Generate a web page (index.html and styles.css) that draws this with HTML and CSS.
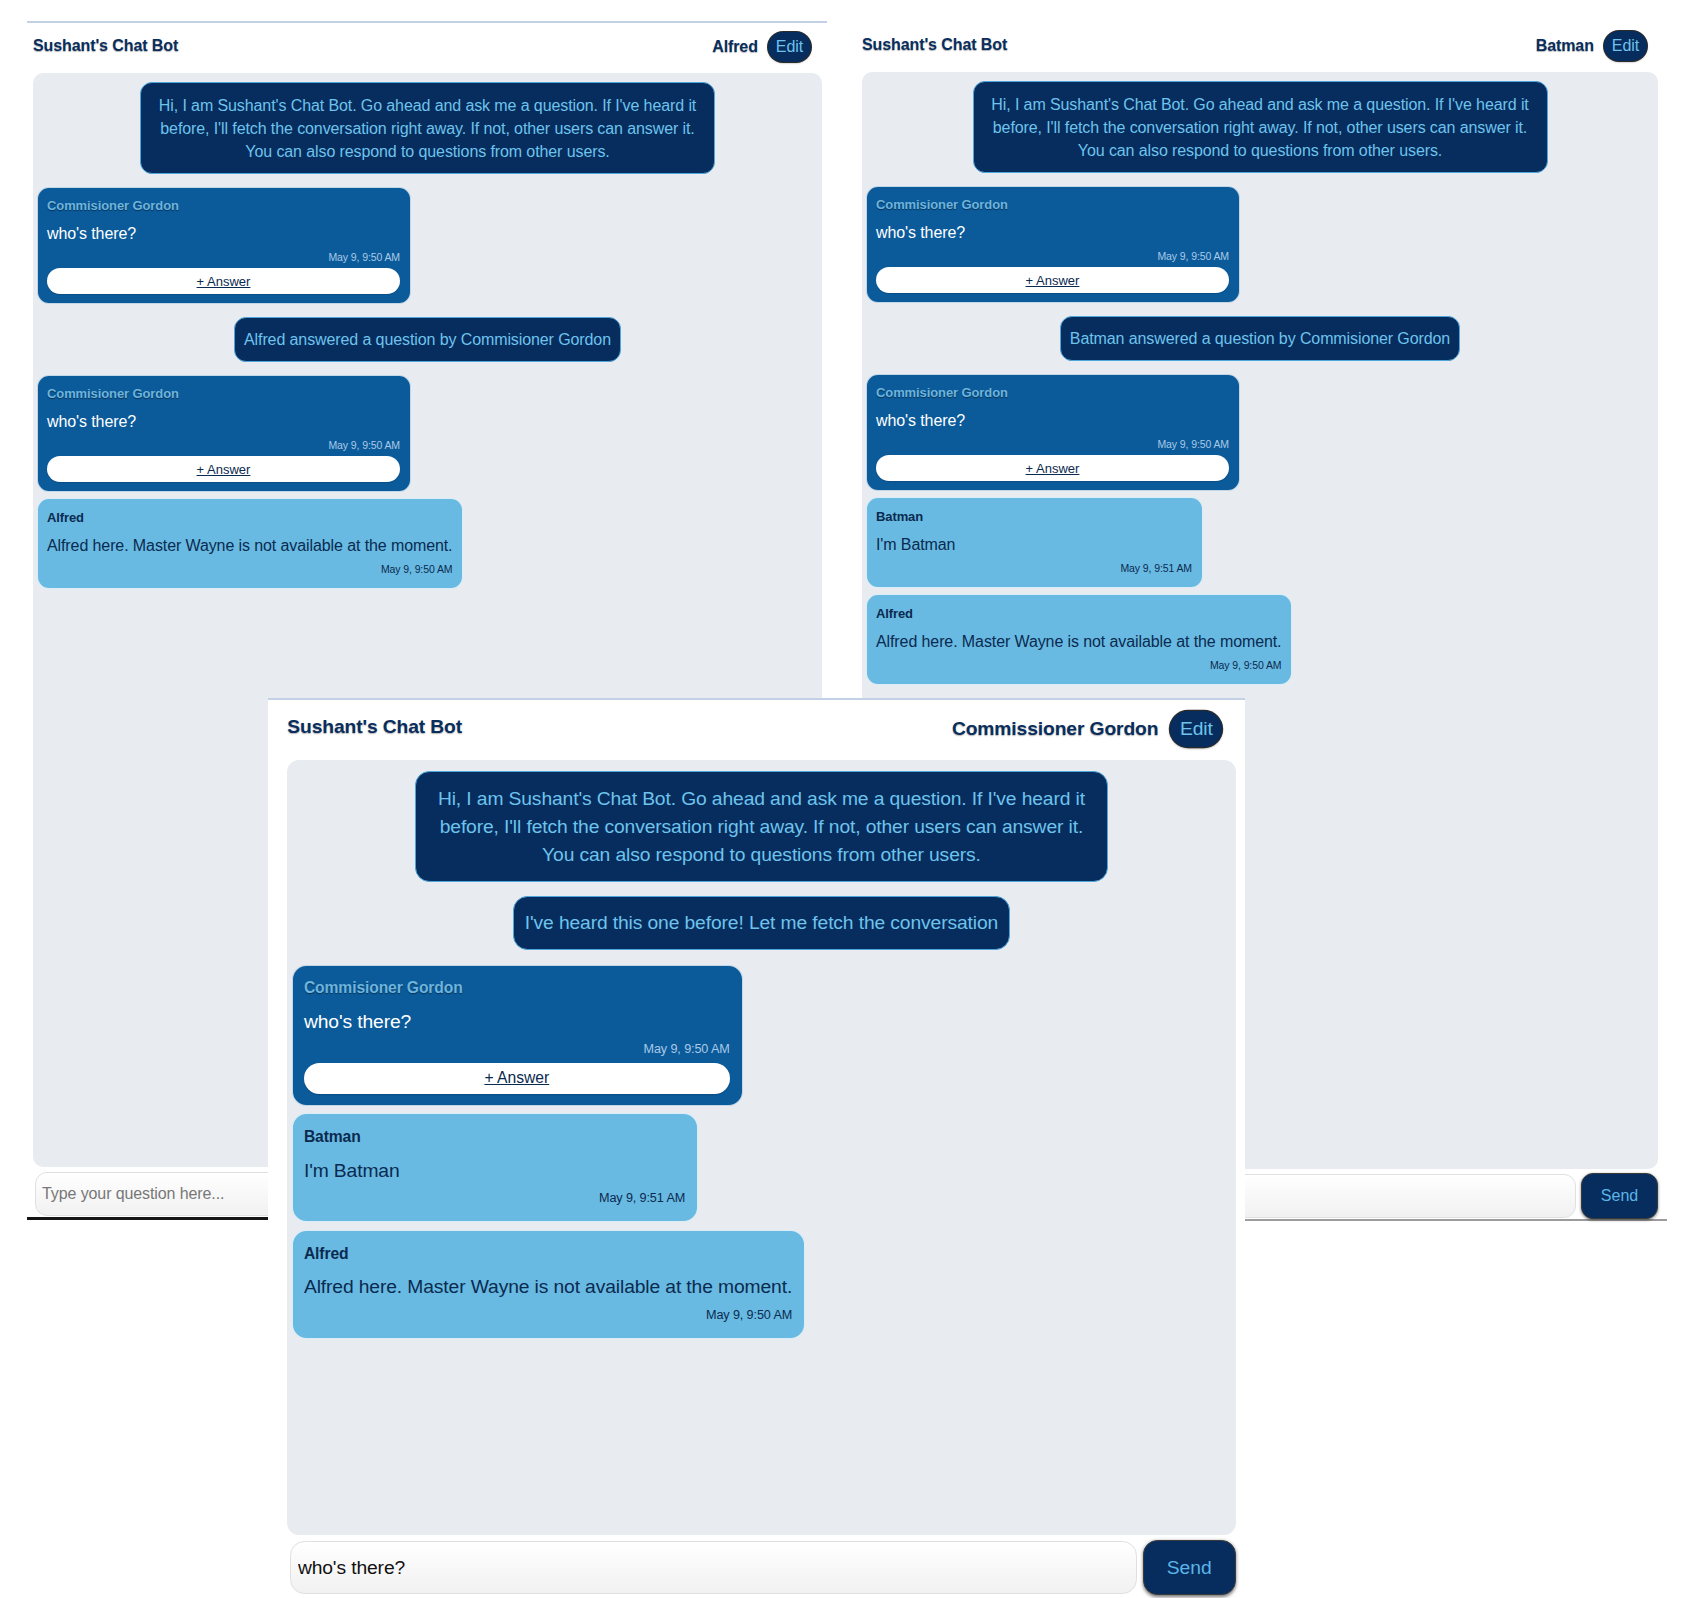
FILE: index.html
```html
<!DOCTYPE html>
<html lang="en">
<head>
<meta charset="utf-8">
<title>Sushant's Chat Bot</title>
<link rel="stylesheet" href="styles.css">
</head>
<body>

<section class="win win-alfred">
  <header class="head">
    <h1 class="title">Sushant's Chat Bot</h1>
    <div class="user"><span class="uname">Alfred</span><button class="edit">Edit</button></div>
  </header>
  <div class="chat">
    <div class="bot welcome">Hi, I am Sushant's Chat Bot. Go ahead and ask me a question. If I've heard it before, I'll fetch the conversation right away. If not, other users can answer it. You can also respond to questions from other users.</div>
    <div class="card q">
      <div class="who">Commisioner Gordon</div>
      <div class="msg">who's there?</div>
      <div class="time">May 9, 9:50 AM</div>
      <button class="answer">+ Answer</button>
    </div>
    <div class="bot">Alfred answered a question by Commisioner Gordon</div>
    <div class="card q">
      <div class="who">Commisioner Gordon</div>
      <div class="msg">who's there?</div>
      <div class="time">May 9, 9:50 AM</div>
      <button class="answer">+ Answer</button>
    </div>
    <div class="card r">
      <div class="who">Alfred</div>
      <div class="msg">Alfred here. Master Wayne is not available at the moment.</div>
      <div class="time">May 9, 9:50 AM</div>
    </div>
  </div>
  <div class="composer">
    <input class="ask" type="text" placeholder="Type your question here...">
    <button class="send">Send</button>
  </div>
</section>

<section class="win win-batman">
  <header class="head">
    <h1 class="title">Sushant's Chat Bot</h1>
    <div class="user"><span class="uname">Batman</span><button class="edit">Edit</button></div>
  </header>
  <div class="chat">
    <div class="bot welcome">Hi, I am Sushant's Chat Bot. Go ahead and ask me a question. If I've heard it before, I'll fetch the conversation right away. If not, other users can answer it. You can also respond to questions from other users.</div>
    <div class="card q">
      <div class="who">Commisioner Gordon</div>
      <div class="msg">who's there?</div>
      <div class="time">May 9, 9:50 AM</div>
      <button class="answer">+ Answer</button>
    </div>
    <div class="bot">Batman answered a question by Commisioner Gordon</div>
    <div class="card q">
      <div class="who">Commisioner Gordon</div>
      <div class="msg">who's there?</div>
      <div class="time">May 9, 9:50 AM</div>
      <button class="answer">+ Answer</button>
    </div>
    <div class="card r">
      <div class="who">Batman</div>
      <div class="msg">I'm Batman</div>
      <div class="time">May 9, 9:51 AM</div>
    </div>
    <div class="card r">
      <div class="who">Alfred</div>
      <div class="msg">Alfred here. Master Wayne is not available at the moment.</div>
      <div class="time">May 9, 9:50 AM</div>
    </div>
  </div>
  <div class="composer">
    <input class="ask" type="text" placeholder="Type your question here...">
    <button class="send">Send</button>
  </div>
</section>

<div class="stage-gordon">
  <section class="win win-gordon">
    <header class="head">
      <h1 class="title">Sushant's Chat Bot</h1>
      <div class="user"><span class="uname">Commissioner Gordon</span><button class="edit">Edit</button></div>
    </header>
    <div class="chat chat-short">
      <div class="bot welcome">Hi, I am Sushant's Chat Bot. Go ahead and ask me a question. If I've heard it before, I'll fetch the conversation right away. If not, other users can answer it. You can also respond to questions from other users.</div>
      <div class="bot">I've heard this one before! Let me fetch the conversation</div>
      <div class="card q">
        <div class="who">Commisioner Gordon</div>
        <div class="msg">who's there?</div>
        <div class="time">May 9, 9:50 AM</div>
        <button class="answer">+ Answer</button>
      </div>
      <div class="card r">
        <div class="who">Batman</div>
        <div class="msg">I'm Batman</div>
        <div class="time">May 9, 9:51 AM</div>
      </div>
      <div class="card r">
        <div class="who">Alfred</div>
        <div class="msg">Alfred here. Master Wayne is not available at the moment.</div>
        <div class="time">May 9, 9:50 AM</div>
      </div>
    </div>
    <div class="composer">
      <input class="ask" type="text" value="who's there?">
      <button class="send">Send</button>
    </div>
  </section>
</div>

</body>
</html>
```

FILE: styles.css
```css
html, body {
  margin: 0;
  padding: 0;
}

body {
  position: relative;
  width: 1695px;
  height: 1598px;
  overflow: hidden;
  background: #ffffff;
  font-family: "Liberation Sans", Arial, Helvetica, sans-serif;
  letter-spacing: -0.1px;
  color: #0b2a50;
}

/* ---------- window shell ---------- */
.win {
  box-sizing: border-box;
  display: flex;
  flex-direction: column;
  background: #ffffff;
  padding: 0 5px 0 6px;
}

.win-alfred {
  position: absolute;
  left: 27px;
  top: 21px;
  width: 800px;
  height: 1199px;
  border-top: 2px solid #c3d1e6;
  border-bottom: 3px solid #151515;
}

.win-batman {
  position: absolute;
  left: 856px;
  top: 20px;
  width: 811px;
  height: 1201px;
  padding-right: 9px;
  border-top: 2px solid #ffffff;
  border-bottom: 2px solid #9c9c9c;
}

.stage-gordon {
  position: absolute;
  left: 268px;
  top: 698px;
}

.win-gordon {
  zoom: 1.205;
  width: 811px;
  padding: 0 8px 0 16px;
  border-top: 2px solid #c3d1e6;
}

/* ---------- header ---------- */
.head {
  flex: none;
  height: 50px;
  display: flex;
  justify-content: space-between;
  align-items: flex-start;
  padding-right: 11px;
}

.title {
  margin: 14px 0 0;
  font-size: 16px;
  line-height: 17px;
  font-weight: 700;
  color: #0a2e5c;
  text-shadow: 0 1px 1px rgba(0, 0, 0, 0.3);
}

.user {
  margin-top: 9px;
  display: flex;
  align-items: center;
  gap: 10px;
}

.uname {
  font-size: 16px;
  font-weight: 700;
  color: #0a2e5c;
  text-shadow: 0 1px 1px rgba(0, 0, 0, 0.3);
}

.edit {
  height: 30px;
  padding: 0 8px;
  border: none;
  border-radius: 15px;
  background: #062d5e;
  color: #6ec3ec;
  font-family: "Liberation Sans", Arial, sans-serif;
  font-size: 16px;
  letter-spacing: -0.1px;
  box-shadow: 0 0 0 1px #2b2b2b, 0 1px 2px rgba(0, 0, 0, 0.5);
}

/* ---------- chat area ---------- */
.chat {
  flex: 1;
  min-height: 0;
  background: #e8ebef;
  border-radius: 10px;
  padding: 9px 4px;
  display: flex;
  flex-direction: column;
  align-items: flex-start;
  gap: 6px;
  overflow: hidden;
}

.chat-short {
  flex: none;
  height: 643px;
  box-sizing: border-box;
}

.bot {
  align-self: center;
  margin: 7px 0;
  box-sizing: border-box;
  background: #062d5e;
  color: #6ec3ec;
  border: 1px solid #4ea6dc;
  border-radius: 12px;
  padding: 10px 9px;
  font-size: 16px;
  line-height: 23px;
  text-align: center;
}

.bot:first-child {
  margin-top: 0;
}

.bot + .bot {
  margin-top: -1px;
}

.welcome {
  max-width: 575px;
  padding: 11px 9px 10px;
}

/* ---------- message cards ---------- */
.card {
  box-sizing: border-box;
  border: 1px solid rgba(255, 255, 255, 0.75);
  border-radius: 12px;
  padding: 10px 10px 11px 9px;
}

.q {
  width: 374px;
  background: #0b5b9b;
  padding-bottom: 9px;
}

.r {
  min-width: 337px;
  background: #68bae2;
  color: #0b2a50;
  padding-top: 11px;
  padding-bottom: 12px;
}

.who {
  font-size: 13px;
  line-height: 16px;
  font-weight: 700;
}

.q .who {
  color: #6db4de;
  text-shadow: 0 1px 1px rgba(0, 0, 0, 0.45);
}

.msg {
  margin-top: 10px;
  font-size: 16px;
  line-height: 20px;
}

.q .msg {
  color: #ffffff;
}

.time {
  margin-top: 7px;
  font-size: 10.5px;
  line-height: 13px;
  text-align: right;
}

.q .time {
  color: #a9c9e6;
}

.answer {
  display: block;
  width: 100%;
  height: 26px;
  margin-top: 4px;
  border: none;
  border-radius: 13px;
  background: #ffffff;
  color: #0b2a50;
  font-family: "Liberation Sans", Arial, sans-serif;
  font-size: 13px;
  text-decoration: underline;
  box-shadow: 0 1px 1px rgba(0, 0, 0, 0.15);
}

/* ---------- composer ---------- */
.composer {
  flex: none;
  height: 50px;
  box-sizing: border-box;
  display: flex;
  align-items: center;
  gap: 5px;
  padding: 5px 0 1px 2px;
}

.ask {
  flex: 1;
  min-width: 0;
  height: 44px;
  box-sizing: border-box;
  border: 1px solid #e0e0e0;
  border-radius: 12px;
  background: linear-gradient(#ffffff, #f1f1f1);
  padding: 0 6px;
  font-family: "Liberation Sans", Arial, sans-serif;
  font-size: 16px;
  letter-spacing: -0.1px;
  color: #111111;
  outline: none;
}

.ask::placeholder {
  color: #777777;
}

.send {
  flex: none;
  width: 77px;
  height: 46px;
  box-sizing: border-box;
  border: 1px solid #3a3a3a;
  border-radius: 12px;
  background: #062d5e;
  color: #5bb5e6;
  font-family: "Liberation Sans", Arial, sans-serif;
  font-size: 16px;
  box-shadow: 0 1px 3px rgba(0, 0, 0, 0.55);
}
```
